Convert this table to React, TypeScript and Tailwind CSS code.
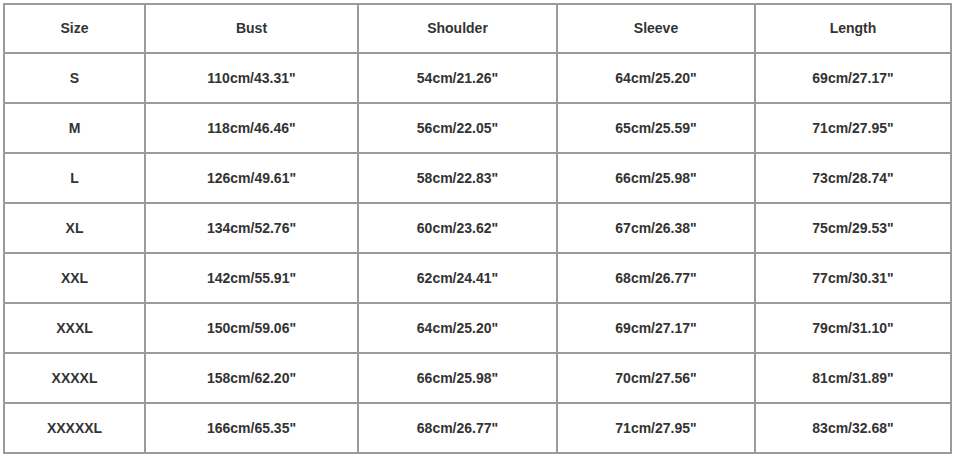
import React from 'react';

const headers = ['Size', 'Bust', 'Shoulder', 'Sleeve', 'Length'];

const rows: string[][] = [
  ['S', '110cm/43.31"', '54cm/21.26"', '64cm/25.20"', '69cm/27.17"'],
  ['M', '118cm/46.46"', '56cm/22.05"', '65cm/25.59"', '71cm/27.95"'],
  ['L', '126cm/49.61"', '58cm/22.83"', '66cm/25.98"', '73cm/28.74"'],
  ['XL', '134cm/52.76"', '60cm/23.62"', '67cm/26.38"', '75cm/29.53"'],
  ['XXL', '142cm/55.91"', '62cm/24.41"', '68cm/26.77"', '77cm/30.31"'],
  ['XXXL', '150cm/59.06"', '64cm/25.20"', '69cm/27.17"', '79cm/31.10"'],
  ['XXXXL', '158cm/62.20"', '66cm/25.98"', '70cm/27.56"', '81cm/31.89"'],
  ['XXXXXL', '166cm/65.35"', '68cm/26.77"', '71cm/27.95"', '83cm/32.68"'],
];

// Tabela de medidas
const App: React.FC = () => {
  return (
    <div className="w-[956px] h-[456px] bg-white pl-[3px] pt-[3px] font-['Liberation_Sans',Arial,sans-serif]">
      <div className="inline-grid grid-cols-[139px_211px_197px_196px_194px] grid-rows-[47px_repeat(8,48px)] gap-[2px] p-[2px] bg-[#9b9b9b]">
        {headers.map((h) => (
          <div
            key={h}
            className="bg-white flex items-center justify-center text-[14px] font-bold text-[#333]"
          >
            {h}
          </div>
        ))}
        {rows.map((row) =>
          row.map((cell, i) => (
            <div
              key={row[0] + i}
              className="bg-white flex items-center justify-center text-[14px] font-bold text-[#333]"
            >
              {cell}
            </div>
          ))
        )}
      </div>
    </div>
  );
};

export default App;
